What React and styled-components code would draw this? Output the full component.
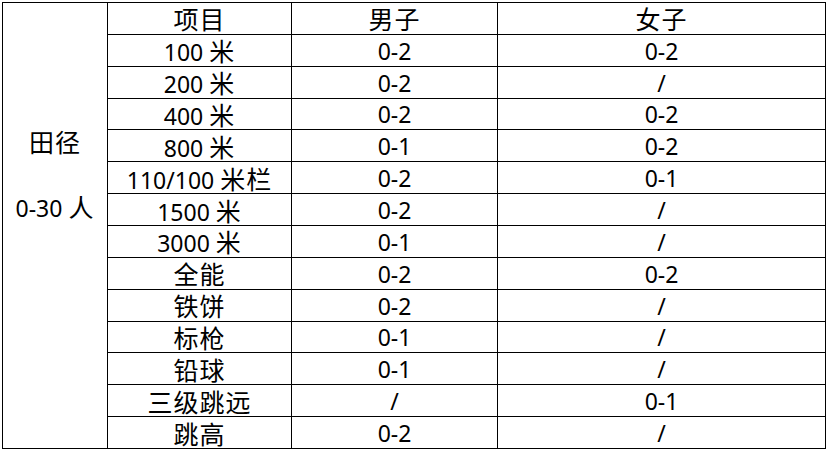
import styled, { createGlobalStyle } from "styled-components";

const GlobalStyle = createGlobalStyle`
	html, body {
		margin: 0;
		padding: 0;
		background: #fff;
	}
	body {
		padding: 2px;
		font-family: "Noto Sans", "Noto Sans CJK SC", sans-serif;
		color: #000;
	}
`;

const Sheet = styled.div`
	display: grid;
	grid-template-columns: 105px 184px 206px 328px;
	grid-template-rows: repeat(14, minmax(0, 1fr));
	width: 824px;
	height: 447px;
	box-sizing: border-box;
	border-top: 1px solid #000;
	border-left: 1px solid #000;
`;

const Cell = styled.div`
	display: flex;
	align-items: center;
	justify-content: center;
	min-height: 0;
	border-right: 1px solid #000;
	border-bottom: 1px solid #000;
	font-size: 23px;
	line-height: 1;
	padding-top: 2px;
	white-space: nowrap;
`;

const GroupCell = styled(Cell)`
	grid-row: 1 / span 14;
	flex-direction: column;
	gap: 33px;
	padding: 0 0 100px;
`;

const Line = styled.span`
	line-height: 1;
`;

const GroupLine = styled(Line)`
	line-height: 32px;
`;

// иероглифы в оригинале крупнее цифр
const Han = styled.span`
	font-family: "Noto Sans CJK SC", sans-serif;
	font-size: 25px;
	letter-spacing: 1px;
	line-height: 1;
`;

const withHan = (text) =>
	text
		.split(/([\u4e00-\u9fff]+)/)
		.map((part, i) =>
			/[\u4e00-\u9fff]/.test(part) ? <Han key={i}>{part}</Han> : part
		);

const rows = [
	["项目", "男子", "女子"],
	["100 米", "0-2", "0-2"],
	["200 米", "0-2", "/"],
	["400 米", "0-2", "0-2"],
	["800 米", "0-1", "0-2"],
	["110/100 米栏", "0-2", "0-1"],
	["1500 米", "0-2", "/"],
	["3000 米", "0-1", "/"],
	["全能", "0-2", "0-2"],
	["铁饼", "0-2", "/"],
	["标枪", "0-1", "/"],
	["铅球", "0-1", "/"],
	["三级跳远", "/", "0-1"],
	["跳高", "0-2", "/"],
];

export default function App() {
	return (
		<>
			<GlobalStyle />
			<Sheet>
				<GroupCell>
					<GroupLine>{withHan("田径")}</GroupLine>
					<GroupLine>{withHan("0-30 人")}</GroupLine>
				</GroupCell>
				{rows.map((row) =>
					row.map((text, i) => (
						<Cell key={row[0] + i}>
							<Line>{withHan(text)}</Line>
						</Cell>
					))
				)}
			</Sheet>
		</>
	);
}
